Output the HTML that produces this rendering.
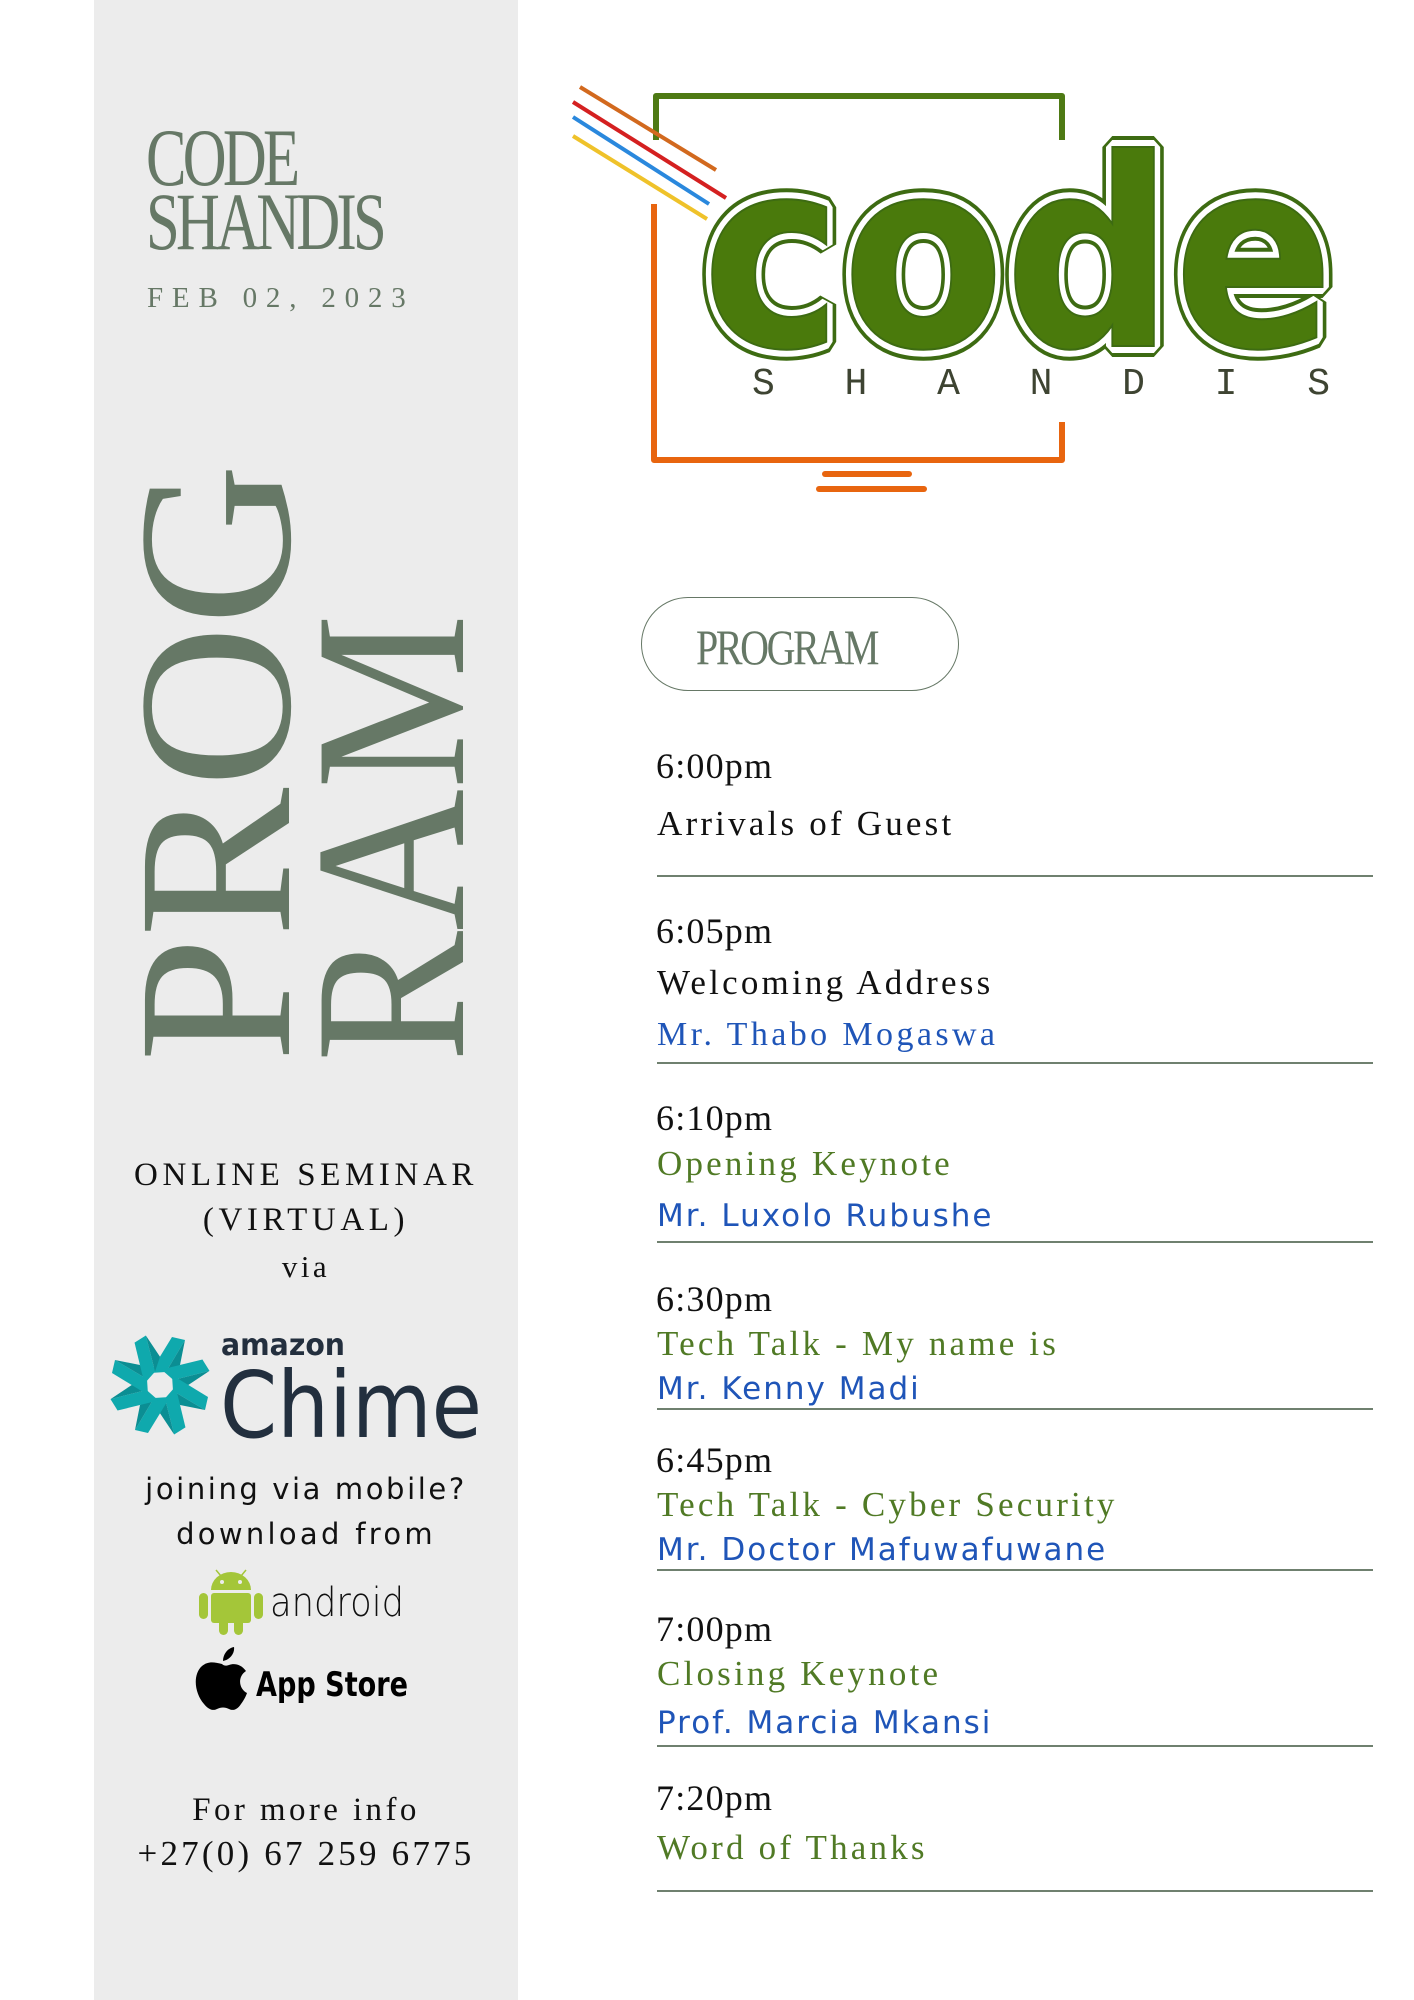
<!DOCTYPE html>
<html><head><meta charset="utf-8"><style>
*{margin:0;padding:0;box-sizing:border-box}
body{width:1414px;height:2000px;background:#fff;position:relative;overflow:hidden;font-family:"Liberation Serif",serif}
.a{position:absolute;white-space:nowrap;line-height:1}
.side{position:absolute;left:94px;top:0;width:424px;height:2000px;background:#ececec}
.g{color:#667866}
.c{left:94px;width:424px;text-align:center}
.t{font-size:36px;color:#111;left:656px;letter-spacing:1.2px}
.d{font-size:35px;color:#111;left:657px;letter-spacing:3.2px}
.gr{color:#507a25}
.bs{font-size:34px;color:#1f55b8;left:657px;letter-spacing:3.4px;font-family:"Liberation Serif",serif}
.bsa{font-size:31px;color:#1f55b8;left:657px;letter-spacing:2px;font-family:"DejaVu Sans","Liberation Sans",sans-serif}
.ln{position:absolute;left:657px;width:716px;height:2px;background:#6f806f}
</style></head><body>
<div class="side"></div>
<div class="a g" style="left:146px;top:117px;font-size:82px;letter-spacing:-5px;transform:scaleX(0.74);transform-origin:left top">CODE</div>
<div class="a g" style="left:146px;top:181px;font-size:82px;letter-spacing:-5px;transform:scaleX(0.74);transform-origin:left top">SHANDIS</div>
<div class="a g" style="left:147px;top:284px;font-size:29px;letter-spacing:8.8px">FEB 02, 2023</div>

<div class="a g" style="left:141px;top:1062px;font-size:220px;transform:rotate(-90deg) scaleX(1.02);transform-origin:left top;line-height:0.68;height:150px">PROG</div>
<div class="a g" style="left:318px;top:1062px;font-size:216px;transform:rotate(-90deg) scaleX(0.91);transform-origin:left top;line-height:0.68;height:150px">RAM</div>

<div class="a c" style="top:1159px;font-size:33px;letter-spacing:4.6px;color:#111">ONLINE SEMINAR</div>
<div class="a c" style="top:1204px;font-size:33px;letter-spacing:4.6px;color:#111">(VIRTUAL)</div>
<div class="a c" style="top:1251px;font-size:31px;letter-spacing:3.5px;color:#111">via</div>

<svg class="a" style="left:110px;top:1325px" width="390" height="120" viewBox="0 0 390 120">
 <g transform="translate(50,60)" fill="#12b3b6">
  <g id="r"><polygon points="-10,-12 12,-48 25,-45 6,-13" fill="#0fa9ad"/><polygon points="6,-13 25,-45 20,-20" fill="#0b8e93"/></g>
  <use href="#r" transform="rotate(45)"/><use href="#r" transform="rotate(90)"/><use href="#r" transform="rotate(135)"/>
  <use href="#r" transform="rotate(180)"/><use href="#r" transform="rotate(225)"/><use href="#r" transform="rotate(270)"/><use href="#r" transform="rotate(315)"/>
 </g>
 <text x="111" y="30" font-family="DejaVu Sans" font-weight="bold" font-size="30" fill="#232f3e" textLength="124" lengthAdjust="spacingAndGlyphs">amazon</text>
 <text x="110" y="112" font-family="DejaVu Sans" font-size="92" fill="#222f3e" textLength="262" lengthAdjust="spacingAndGlyphs">Chime</text>
</svg>

<div class="a c" style="top:1475px;font-size:29px;letter-spacing:2.6px;color:#111;font-family:'DejaVu Sans',sans-serif">joining via mobile?</div>
<div class="a c" style="top:1520px;font-size:29px;letter-spacing:3.3px;color:#111;font-family:'DejaVu Sans',sans-serif">download from</div>

<svg class="a" style="left:198px;top:1568px" width="220" height="70" viewBox="0 0 220 70">
 <g fill="#a4c639">
  <path d="M13,22 a20,18 0 0 1 40,0z"/>
  <rect x="13" y="25" width="40" height="30" rx="3"/>
  <rect x="1" y="25" width="9" height="26" rx="4.5"/><rect x="56" y="25" width="9" height="26" rx="4.5"/>
  <rect x="21" y="50" width="9" height="17" rx="4.5"/><rect x="36" y="50" width="9" height="17" rx="4.5"/>
  <line x1="18" y1="2" x2="23" y2="8" stroke="#a4c639" stroke-width="1.5"/><line x1="48" y1="2" x2="43" y2="8" stroke="#a4c639" stroke-width="1.5"/>
 </g>
 <circle cx="24" cy="14" r="2" fill="#ececec"/><circle cx="42" cy="14" r="2" fill="#ececec"/>
 <text x="72" y="48" font-family="DejaVu Sans" font-weight="200" font-size="40" fill="#111" textLength="134" lengthAdjust="spacingAndGlyphs">android</text>
</svg>

<svg class="a" style="left:194px;top:1644px" width="225" height="70" viewBox="0 0 225 70">
 <path d="M28,20 c-8,-2 -14,-3 -20,2 c-10,9 -7,28 2,38 c5,6 9,7 13,5 c4,-2 8,-2 12,0 c4,2 8,1 12,-5 c3,-4 5,-8 6,-11 c-8,-4 -10,-16 -1,-22 c-5,-7 -12,-8 -17,-6 c-3,1 -5,1 -7,-1z" fill="#000"/>
 <path d="M29,17 c0,-7 5,-13 11,-14 c1,7 -5,13 -11,14z" fill="#000"/>
 <text x="62" y="52" font-family="DejaVu Sans" font-weight="bold" font-size="34" fill="#000" textLength="152" lengthAdjust="spacingAndGlyphs">App Store</text>
</svg>

<div class="a c" style="top:1794px;font-size:33px;letter-spacing:3.4px;color:#111">For more info</div>
<div class="a c" style="top:1836px;font-size:35px;letter-spacing:3.2px;color:#111">+27(0) 67 259 6775</div>

<!-- logo -->
<svg class="a" style="left:560px;top:80px" width="800" height="430" viewBox="560 80 800 430">
 <path d="M656,140 V96 H1062 V140" fill="none" stroke="#4e7a14" stroke-width="6" stroke-linejoin="round"/>
 <path d="M654,204 V460 H1062 V422" fill="none" stroke="#e8650f" stroke-width="6" stroke-linejoin="round"/>
 <line x1="825" y1="474" x2="909" y2="474" stroke="#e8650f" stroke-width="6" stroke-linecap="round"/>
 <line x1="819" y1="489" x2="924" y2="489" stroke="#e8650f" stroke-width="6" stroke-linecap="round"/>
 <line x1="580" y1="87" x2="716" y2="170" stroke="#d2691e" stroke-width="4"/>
 <line x1="573" y1="102" x2="726" y2="198" stroke="#d42020" stroke-width="4"/>
 <line x1="573" y1="117" x2="709" y2="204" stroke="#2a88dd" stroke-width="4"/>
 <line x1="573" y1="136" x2="707" y2="219" stroke="#efc22a" stroke-width="4"/>
 <g font-family="DejaVu Sans" font-weight="bold" font-size="262">
  <text x="702" y="346" textLength="632" lengthAdjust="spacingAndGlyphs" fill="none" stroke="#3d6b12" stroke-width="22" stroke-linejoin="bevel">code</text>
  <text x="702" y="346" textLength="632" lengthAdjust="spacingAndGlyphs" fill="none" stroke="#fff" stroke-width="14" stroke-linejoin="bevel">code</text>
  <text x="702" y="346" textLength="632" lengthAdjust="spacingAndGlyphs" fill="#4a7a0c" stroke="#3d6b12" stroke-width="2">code</text>
 </g>
 <text x="752" y="394" font-family="Liberation Mono" font-size="38" fill="#3e4432" textLength="578" lengthAdjust="spacing">SHANDIS</text>
</svg>

<div class="a" style="left:641px;top:597px;width:318px;height:94px;border:1.5px solid #667866;border-radius:47px"></div>
<div class="a g" style="left:696px;top:622px;font-size:50px;letter-spacing:-3px;transform:scaleX(0.8);transform-origin:left top">PROGRAM</div>

<div class="a t" style="top:748px">6:00pm</div>
<div class="a d" style="top:806px">Arrivals of Guest</div>
<div class="ln" style="top:875px"></div>

<div class="a t" style="top:913px">6:05pm</div>
<div class="a d" style="top:965px">Welcoming Address</div>
<div class="a bs" style="top:1018px">Mr. Thabo Mogaswa</div>
<div class="ln" style="top:1062px"></div>

<div class="a t" style="top:1100px">6:10pm</div>
<div class="a d gr" style="top:1146px">Opening Keynote</div>
<div class="a bsa" style="top:1201px">Mr. Luxolo Rubushe</div>
<div class="ln" style="top:1241px"></div>

<div class="a t" style="top:1281px">6:30pm</div>
<div class="a d gr" style="top:1326px">Tech Talk - My name is</div>
<div class="a bsa" style="top:1374px">Mr. Kenny Madi</div>
<div class="ln" style="top:1408px"></div>

<div class="a t" style="top:1442px">6:45pm</div>
<div class="a d gr" style="top:1487px">Tech Talk - Cyber Security</div>
<div class="a bsa" style="top:1535px">Mr. Doctor Mafuwafuwane</div>
<div class="ln" style="top:1569px"></div>

<div class="a t" style="top:1611px">7:00pm</div>
<div class="a d gr" style="top:1656px">Closing Keynote</div>
<div class="a bsa" style="top:1708px">Prof. Marcia Mkansi</div>
<div class="ln" style="top:1745px"></div>

<div class="a t" style="top:1780px">7:20pm</div>
<div class="a d gr" style="top:1830px">Word of Thanks</div>
<div class="ln" style="top:1890px"></div>
</body></html>
